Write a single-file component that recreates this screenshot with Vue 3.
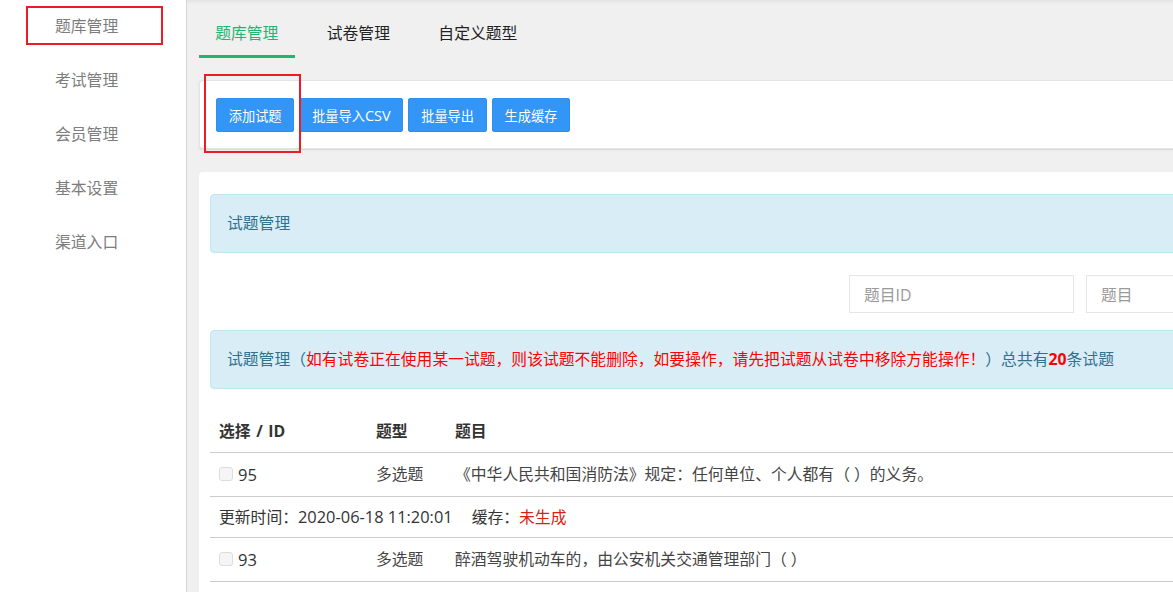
<script setup>
const sideItems = ['题库管理', '考试管理', '会员管理', '基本设置', '渠道入口']
const tabs = ['题库管理', '试卷管理', '自定义题型']
const actions = [
  { label: '添加试题' },
  { label: '批量导入', latin: 'CSV' },
  { label: '批量导出' },
  { label: '生成缓存' },
]
const questions = [
  { id: 95, type: '多选题', title: '《中华人民共和国消防法》规定：任何单位、个人都有（ ）的义务。', time: '2020-06-18 11:20:01' },
  { id: 93, type: '多选题', title: '醉酒驾驶机动车的，由公安机关交通管理部门（ ）' },
]
</script>

<template>
  <div class="page">
    <aside class="side">
      <a v-for="item in sideItems" :key="item" class="side-item">{{ item }}</a>
      <span class="mark mark--side"></span>
    </aside>

    <main class="main">
      <nav class="tabs">
        <a v-for="(tab, i) in tabs" :key="tab" :class="['tab', { 'tab--active': i === 0 }]">{{ tab }}</a>
      </nav>

      <div class="toolbar">
        <button v-for="a in actions" :key="a.label" class="btn">{{ a.label }}<span v-if="a.latin" class="btn-latin">{{ a.latin }}</span></button>
        <span class="mark mark--add"></span>
      </div>

      <section class="card">
        <div class="alert alert--title">试题管理</div>

        <div class="filters">
          <input class="field" placeholder="题目ID" />
          <input class="field" placeholder="题目" />
        </div>

        <div class="alert alert--note">
          试题管理（<span class="warn">如有试卷正在使用某一试题，则该试题不能删除，如要操作，请先把试题从试卷中移除方能操作！</span>）总共有<b class="warn">20</b>条试题
        </div>

        <table class="table">
          <colgroup>
            <col class="col-id" />
            <col class="col-type" />
            <col />
          </colgroup>
          <thead>
            <tr>
              <th>选择 / ID</th>
              <th>题型</th>
              <th>题目</th>
            </tr>
          </thead>
          <tbody>
            <template v-for="q in questions" :key="q.id">
              <tr class="row">
                <td><input type="checkbox" class="check" /><span class="qid">{{ q.id }}</span></td>
                <td class="muted">{{ q.type }}</td>
                <td class="muted">{{ q.title }}</td>
              </tr>
              <tr v-if="q.time" class="row--meta">
                <td colspan="3">
                  更新时间：<span class="time">{{ q.time }}</span><span class="cache">缓存：<span class="none">未生成</span></span>
                </td>
              </tr>
            </template>
          </tbody>
        </table>
      </section>
    </main>
  </div>
</template>

<style>
html,
body {
  margin: 0;
  height: 100%;
  overflow: hidden;
}
</style>

<style scoped>
.page {
  display: flex;
  width: 1500px;
  height: 592px;
  overflow: hidden;
  background: #f0f0f0;
  color: #333;
  font-family: "Open Sans", "Noto Sans CJK SC", sans-serif;
  font-size: 15.8px;
}

.side {
  position: relative;
  flex: none;
  box-sizing: border-box;
  width: 187px;
  background: #fff;
  border-right: 1px solid #d5d5d5;
}

.side-item {
  display: block;
  height: 54px;
  line-height: 53px;
  padding-left: 55px;
  color: #7d7d7d;
}

.mark {
  position: absolute;
  box-sizing: border-box;
  border: 2px solid #ed1c24;
}

.mark--side {
  left: 26px;
  top: 6px;
  width: 137px;
  height: 39px;
}

.main {
  flex: 1;
  min-width: 0;
  padding-left: 12px;
  box-shadow: inset 0 4px 4px -3px rgba(0, 0, 0, 0.08);
}

.tabs {
  display: flex;
  gap: 16px;
  height: 58px;
}

.tab {
  height: 58px;
  box-sizing: border-box;
  padding: 0 16.2px;
  line-height: 66px;
  color: #222;
}

.tab--active {
  color: #20b66e;
  border-bottom: 3px solid #20b66e;
}

.toolbar {
  position: relative;
  display: flex;
  gap: 5px;
  box-sizing: border-box;
  height: 69px;
  margin-top: 22px;
  padding: 17px 16px;
  background: #fff;
  border: 1px solid #e4e4e4;
  border-radius: 4px;
  box-shadow: 0 1px 2px rgba(0, 0, 0, 0.1);
}

.btn {
  height: 34px;
  padding: 0 11.8px;
  font: inherit;
  font-size: 13.2px;
  color: #fff;
  background: #3396f7;
  border: 1px solid #2f8ff0;
  border-radius: 2px;
}

.btn-latin {
  font-size: 14.5px;
}

.mark--add {
  left: 4px;
  top: -7px;
  width: 97px;
  height: 79px;
}

.card {
  margin-top: 23px;
  padding: 22px 0 0 11px;
  background: #fff;
  border-radius: 4px;
  height: 420px;
}

.alert {
  box-sizing: border-box;
  height: 59px;
  padding-left: 16px;
  line-height: 57px;
  color: #31708f;
  background: #d9edf7;
  border: 1px solid #bce8f1;
  border-radius: 4px;
}

.warn {
  color: #f00;
}

.filters {
  display: flex;
  gap: 12px;
  margin: 22px 0 17px;
  padding-left: 639px;
}

.field {
  box-sizing: border-box;
  width: 225px;
  height: 38px;
  padding: 2px 14px 0;
  font: inherit;
  background: #fff;
  border: 1px solid #e6e6e6;
  outline: none;
}

.field::placeholder {
  color: #9a9a9a;
}

.table {
  width: 100%;
  margin-top: 21px;
  border-collapse: collapse;
  table-layout: fixed;
}

.col-id {
  width: 157px;
}

.col-type {
  width: 79px;
}

th {
  height: 40px;
  padding: 0 9px 2px;
  text-align: left;
  font-weight: 700;
  word-spacing: 1.5px;
  border-bottom: 1px solid #ccc;
}

td {
  height: 40px;
  padding: 0 9px 3px;
  border-bottom: 1px solid #ccc;
}

.row--meta td {
  height: 38px;
  padding-bottom: 2px;
}

.check {
  appearance: none;
  box-sizing: border-box;
  width: 14px;
  height: 14px;
  margin: 0 5px 0 0;
  vertical-align: -1px;
  background: #f5f5f5;
  border: 1px solid #ddd;
  border-radius: 3px;
}

.qid {
  position: relative;
  top: 1px;
  font-size: 16.5px;
}

.muted {
  color: #444;
}

.time {
  font-size: 16.4px;
}

.cache {
  margin-left: 19px;
}

.none {
  color: #d9230f;
}
</style>
